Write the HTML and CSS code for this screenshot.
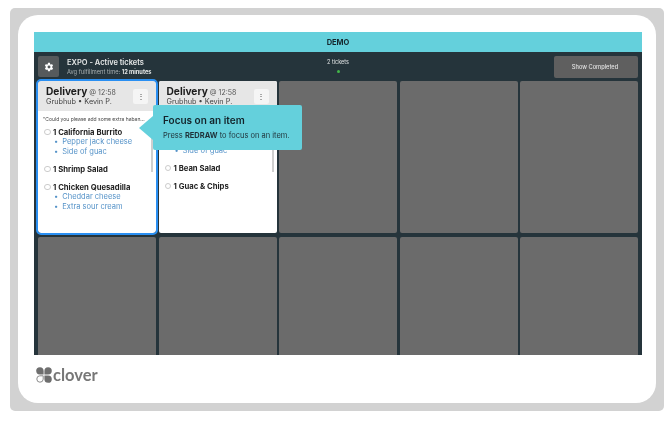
FILE: index.html
```html
<!DOCTYPE html>
<html lang="en">
<head>
    <meta charset="UTF-8">
    <meta name="viewport" content="width=device-width, initial-scale=1.0">
    <title>Clover Expo Demo</title>
    <link rel="stylesheet" href="styles.css">
</head>
<body>
<div class="frame">
    <div class="panel">
        <div class="screen">
            <div class="demo-bar">DEMO</div>

            <div class="toolbar">
                <div class="toolbar-left">
                    <div class="gear-btn">
                        <svg width="10" height="10" viewBox="0 0 24 24"><path fill="#fff" fill-rule="evenodd" d="M19.4 13c.1-.3.1-.7.1-1s0-.7-.1-1l2.100-1.600c.2-.2.2-.4.1-.6l-2-3.500c-.1-.2-.4-.3-.6-.2l-2.500 1c-.5-.4-1.100-.7-1.700-1l-.4-2.600c0-.3-.2-.5-.5-.5h-4c-.3 0-.5.2-.5.4l-.4 2.700c-.6.3-1.200.6-1.700 1l-2.500-1c-.2-.1-.5 0-.6.2l-2 3.500c-.1.2-.1.4.1.6L4.500 11c-.1.300-.1.700-.1 1s0 .7.1 1l-2.100 1.600c-.2.2-.2.4-.1.6l2 3.500c.1.2.4.3.6.2l2.500-1c.5.4 1.100.7 1.700 1l.4 2.600c0 .3.2.5.5.5h4c.3 0 .5-.2.5-.4l.4-2.700c.6-.3 1.200-.6 1.700-1l2.500 1c.2.1.5 0 .6-.2l2-3.500c.1-.2.1-.4-.1-.6L19.400 13zM12 15.500a3.500 3.500 0 1 1 0-7 3.500 3.500 0 0 1 0 7z"/></svg>
                    </div>
                    <div class="expo-info">
                        <div class="expo-title">EXPO - Active tickets</div>
                        <div class="expo-sub">Avg fulfillment time: <b>12 minutes</b></div>
                    </div>
                </div>
                <div class="ticket-count">
                    <span>2 tickets</span>
                    <i class="status-dot"></i>
                </div>
                <div class="show-btn">Show Completed</div>
            </div>

            <div class="ticket-grid">
                <div class="ticket ticket-focus">
                    <div class="ticket-head">
                        <div>
                            <div class="ticket-type"><b>Delivery</b> <span>@ 12:58</span></div>
                            <div class="ticket-from">Grubhub • Kevin P.</div>
                        </div>
                        <div class="more-btn">⋮</div>
                    </div>
                    <div class="ticket-body">
                        <div class="ticket-note">"Could you please add some extra haban...</div>
                        <div class="item"><i class="check"></i>1 California Burrito</div>
                        <ul class="mods">
                            <li>Pepper jack cheese</li>
                            <li>Side of guac</li>
                        </ul>
                        <div class="item"><i class="check"></i>1 Shrimp Salad</div>
                        <div class="item"><i class="check"></i>1 Chicken Quesadilla</div>
                        <ul class="mods">
                            <li>Cheddar cheese</li>
                            <li>Extra sour cream</li>
                        </ul>
                        <div class="scrollbar"></div>
                    </div>
                </div>

                <div class="ticket">
                    <div class="ticket-head">
                        <div>
                            <div class="ticket-type"><b>Delivery</b> <span>@ 12:58</span></div>
                            <div class="ticket-from">Grubhub • Kevin P.</div>
                        </div>
                        <div class="more-btn">⋮</div>
                    </div>
                    <div class="ticket-body">
                        <!-- the top of this ticket sits behind the tooltip -->
                        <div class="hidden-rows"></div>
                        <ul class="mods">
                            <li>Side of guac</li>
                        </ul>
                        <div class="item"><i class="check"></i>1 Bean Salad</div>
                        <div class="item"><i class="check"></i>1 Guac &amp; Chips</div>
                        <div class="scrollbar"></div>
                    </div>
                </div>

                <div class="ticket-empty"></div>
                <div class="ticket-empty"></div>
                <div class="ticket-empty"></div>
                <div class="ticket-empty"></div>
                <div class="ticket-empty"></div>
                <div class="ticket-empty"></div>
                <div class="ticket-empty"></div>
                <div class="ticket-empty"></div>
            </div>

            <div class="tooltip">
                <div class="tooltip-title">Focus on an item</div>
                <div class="tooltip-text">Press <b>REDRAW</b> to focus on an item.</div>
            </div>
        </div>

        <div class="brand">
            <svg width="16" height="16" viewBox="0 0 16 16">
                <path fill="#6f6f6f" d="M7.600 7.600H3.800a3.700 3.700 0 1 1 3.800-3.800z"/>
                <path fill="#6f6f6f" d="M8.400 7.600h3.800a3.700 3.700 0 1 0-3.800-3.800z"/>
                <path fill="#6f6f6f" d="M8.400 8.400h3.800a3.700 3.700 0 1 1-3.800 3.800z"/>
                <path fill="none" stroke="#6f6f6f" stroke-width=".8" d="M7.200 8.800H3.800a3.200 3.200 0 1 0 3.400 3.400z"/>
            </svg>
            <span>clover</span>
        </div>
    </div>
</div>
</body>
</html>
```

FILE: styles.css
```css
/* Page + device frame */
body {
    margin: 0;
    background: #fff;
    font-family: Inter, "Liberation Sans", sans-serif;
}

.frame {
    width: 638px;
    height: 388px;
    margin: 8px 0 0 10px;
    padding: 7px 8px 8px;
    background: #d2d2d2;
    border-radius: 5px;
    filter: blur(0.3px);
}

.panel {
    height: 388px;
    box-sizing: border-box;
    padding: 17px 14px 0 16px;
    background: #fff;
    border-radius: 20px;
}

/* Tablet screen */
.screen {
    position: relative;
    height: 323px;
    overflow: hidden;
    background: #25343b;
}

.demo-bar {
    height: 20px;
    line-height: 21px;
    text-align: center;
    font-size: 7.5px;
    font-weight: 700;
    color: #15262c;
    background: #64d0dc;
}

/* Toolbar */
.toolbar {
    height: 29px;
    display: grid;
    grid-template-columns: 1fr 84px;
    align-items: center;
    padding: 0 4px;
    position: relative;
}

.toolbar-left {
    display: flex;
    align-items: center;
    gap: 8px;
}

.gear-btn {
    width: 21px;
    height: 21px;
    display: flex;
    justify-content: center;
    align-items: center;
    background: #565a5c;
    border-radius: 2px;
}

.expo-title {
    font-size: 7.5px;
    font-weight: 600;
    color: #e6e8e8;
}

.expo-sub {
    margin-top: 1px;
    font-size: 5.7px;
    color: #a9b0b2;
}

.expo-sub b {
    color: #e6e8e8;
}

.ticket-count {
    position: absolute;
    left: 280px;
    top: 7px;
    width: 48px;
    display: flex;
    flex-direction: column;
    align-items: center;
    gap: 5px;
    font-size: 5.5px;
    color: #dfe2e3;
}

.status-dot {
    width: 3px;
    height: 3px;
    border-radius: 50%;
    background: #43b649;
}

.show-btn {
    height: 22px;
    line-height: 22px;
    padding-right: 2px;
    text-align: center;
    font-size: 5.7px;
    font-weight: 500;
    color: #e2e2e2;
    background: #5f5f5f;
    border-radius: 2px;
}

/* Ticket grid */
.ticket-grid {
    display: grid;
    grid-template-columns: repeat(5, 1fr);
    grid-auto-rows: 152px;
    gap: 3.500px 2.500px;
    padding: 0 4px;
}

.ticket-empty {
    background: #6b6b6b;
    border-radius: 2px;
}

.ticket {
    display: flex;
    flex-direction: column;
    background: #fff;
    border-radius: 2px;
}

.ticket-focus {
    position: relative;
    z-index: 1;
    outline: 2px solid #2a8ff2;
    border-radius: 3px;
}

.ticket-head {
    height: 30px;
    flex-shrink: 0;
    box-sizing: border-box;
    display: flex;
    justify-content: space-between;
    padding: 4px 8px 0;
    background: #e6e6e6;
    border-radius: 2px 2px 0 0;
}

.ticket-type {
    font-size: 7px;
    color: #555;
}

.ticket-type b {
    font-size: 10.200px;
    color: #1c1c1c;
}

.ticket-from {
    font-size: 7.300px;
    color: #444;
}

.more-btn {
    width: 15px;
    height: 15px;
    margin-top: 4px;
    line-height: 15px;
    text-align: center;
    font-size: 8px;
    color: #444;
    background: #f5f5f5;
    border-radius: 2px;
}

.ticket-body {
    position: relative;
    flex: 1;
    padding: 5px 0 0 6px;
}

.ticket-note {
    margin: 0 0 4px -1px;
    font-size: 5px;
    line-height: 6px;
    color: #444;
    white-space: nowrap;
}

.hidden-rows {
    height: 30px;
}

.item {
    display: flex;
    align-items: center;
    height: 12px;
    font-size: 7.700px;
    font-weight: 700;
    color: #222;
}

.check {
    box-sizing: border-box;
    width: 6.500px;
    height: 6.500px;
    margin-right: 2.500px;
    border: 0.5px solid #ccc;
    border-radius: 50%;
}

.mods {
    list-style: none;
    margin: -1px 0 6px;
    padding: 0 0 0 10px;
    font-size: 7.500px;
    line-height: 10px;
    color: #5492c8;
}

.hidden-rows + .mods {
    margin-top: 0;
}

.mods li::before {
    content: "•";
    margin-right: 4px;
}

.item + .item {
    margin-top: 6px;
}

.scrollbar {
    position: absolute;
    right: 3px;
    top: 7px;
    width: 2px;
    height: 54px;
    background: #cfcfcf;
}

/* Tooltip over the grid */
.tooltip {
    position: absolute;
    z-index: 2;
    left: 119px;
    top: 73px;
    width: 149px;
    height: 45px;
    box-sizing: border-box;
    padding: 9px 0 0 10px;
    background: #64d0dc;
    border-radius: 2px;
}

.tooltip::before {
    content: "";
    position: absolute;
    left: -14px;
    top: 11px;
    border: 12px solid transparent;
    border-left: 0;
    border-right: 14px solid #64d0dc;
}

.tooltip-title {
    font-size: 10px;
    font-weight: 600;
    color: #13232a;
}

.tooltip-text {
    margin-top: 5px;
    font-size: 7.500px;
    color: #1f3138;
}

/* Logo under the screen */
.brand {
    display: flex;
    align-items: center;
    gap: 1px;
    margin-top: 12px;
    margin-left: 2px;
    font-family: Lato, sans-serif;
    font-size: 16.500px;
    font-weight: 700;
    line-height: 16px;
    color: #777;
}
```
